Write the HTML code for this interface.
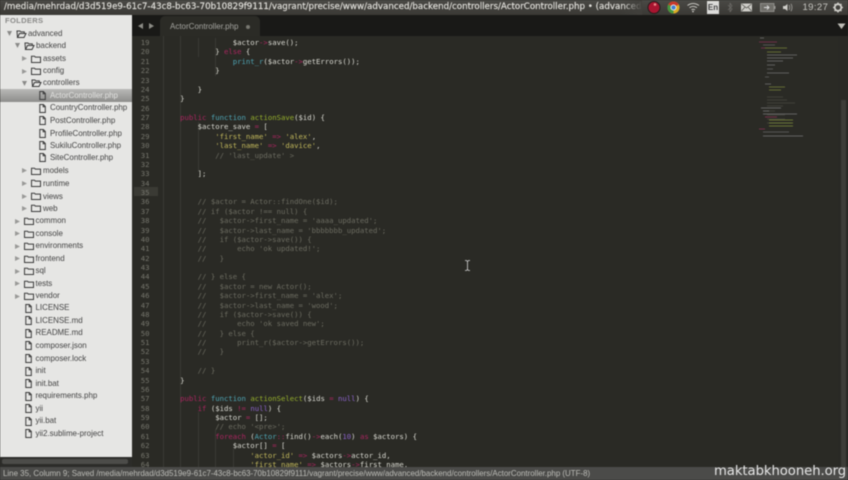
<!DOCTYPE html>
<html><head><meta charset="utf-8"><style>
html,body{margin:0;padding:0;background:#2a2a25}
#root{position:relative;width:848px;height:480px;overflow:hidden;background:#2a2a25;filter:blur(.45px)}
.a{position:absolute}
#top{left:0;top:0;width:848px;height:15px;background:linear-gradient(#4a4945,#3a3935)}
#title{left:4px;top:0;height:15px;font:8.7px/15px "DejaVu Sans",sans-serif;color:#e2e1dc;white-space:nowrap;width:637px;overflow:hidden;-webkit-text-stroke:.15px #e2e1dc}
#tabs{left:132px;top:15px;width:716px;height:21px;background:#191917}
#tab{left:160px;top:16px;width:100px;height:20px;background:#2b2b26;border-radius:5px 5px 0 0}
#tabt{left:170px;top:21px;font:8px/12px "Liberation Sans",sans-serif;color:#a5a5a0;white-space:nowrap}
#side{left:0;top:15px;width:132px;height:442px;background:#e6e6e4}
#sb{left:0;top:457px;width:132px;height:10px;background:#2c2c29}
#sbb{left:2px;top:459px;width:126px;height:5px;background:#4c4c49;border-radius:2px}
#sel{left:0;top:89px;width:132px;height:13px;background:linear-gradient(#b9b9b7,#8d8d8b)}
.t{position:absolute;font:7.95px/12px "Liberation Sans",sans-serif;color:#444;white-space:nowrap;margin-top:.5px}
svg.i{position:absolute;overflow:visible}
#folders{left:5px;top:16px;font:bold 7.6px/10px "Liberation Sans",sans-serif;color:#8a8a88;letter-spacing:.3px}
#nums{left:134px;top:38px;width:15.5px;text-align:right;color:#75756c}
#code{left:162.6px;top:38px}
pre{margin:0;font:7.29px/9.37px "DejaVu Sans Mono","Liberation Mono",monospace;color:#dcdcd4;position:absolute;white-space:pre}
.k{color:#a9255f}.f{color:#4ea5b5}.g{color:#96b02c}.s{color:#c3b95c}.c{color:#6d6d62}.p{color:#8a62c8}.o{color:#a9255f}
#hl{left:134px;top:187px;width:24px;height:9.4px;background:#3a3a34}
#status{left:0;top:467px;width:848px;height:13px;background:#4b4b49}
#stt{left:3px;top:467px;font:7.93px/13px "Liberation Sans",sans-serif;color:#bdbdb8;white-space:nowrap}
#wm{left:714px;top:463px;font:13.2px/17px "DejaVu Sans",sans-serif;color:#e6e6e6;white-space:nowrap;letter-spacing:-.05px}
#scroll{left:838px;top:36px;width:10px;height:431px;background:#292925}
#thumb{left:841px;top:100px;width:5px;height:367px;background:#3d3d38}
#clock{left:802.5px;top:0;font:9.5px/15px "Liberation Sans",sans-serif;color:#c8c7c2;letter-spacing:.4px}
#en{left:707px;top:1px;width:12px;height:13px;background:#dcdcda;color:#444;font:bold 8px/13px "Liberation Sans",sans-serif;text-align:center}
</style></head><body><div id="root">
<svg width="0" height="0" style="position:absolute"><defs>
<symbol id="fo" viewBox="0 0 10 8"><path d="M.5 7.5V1.2h3l.8.9h5.2v5.4z" fill="none" stroke="#3a3a3a" stroke-width="1"/></symbol>
<symbol id="fp" viewBox="0 0 10 8"><path d="M1 7.5L.5 1h3l.8.9h3.5v1.5M1 7.5h6.5l2-4H3z" fill="none" stroke="#3a3a3a" stroke-width="1"/></symbol>
<symbol id="fi" viewBox="0 0 7 9"><path d="M.8.5h3.5l2 2v6h-5.500zM4.200.5v2.200h2.100" fill="none" stroke="#3a3a3a" stroke-width="1"/></symbol>
<symbol id="tr" viewBox="0 0 5 5"><path d="M0 0l5 2.500-5 2.500z" fill="#9a9a98"/></symbol>
<symbol id="td" viewBox="0 0 5 5"><path d="M0 0h5l-2.500 5z" fill="#8a8a88"/></symbol>
</defs></svg>

<div class="a" id="top"></div>
<div class="a" id="title">/media/mehrdad/d3d519e9-61c7-43c8-bc63-70b10829f9111/vagrant/precise/www/advanced/backend/controllers/ActorController.php • (advanced)</div>
<div class="a" style="left:622px;top:0;width:20px;height:15px;background:linear-gradient(90deg,rgba(65,64,60,0),#41403c)"></div>

<svg class="a" style="left:646px;top:0" width="202" height="15" viewBox="0 0 202 15">
<circle cx="8" cy="7.500" r="6" fill="#a81530"/><circle cx="8" cy="7.500" r="6" fill="none" stroke="#241b1b" stroke-width="1"/><circle cx="9" cy="4.500" r="1.300" fill="#e88"/>
<circle cx="27.500" cy="7.500" r="6" fill="#d9ac25"/><path d="M27.500 7.500L22.300 4.500A6 6 0 0 1 32.700 4.500z" fill="#c7372b"/><path d="M27.500 7.500L22.300 4.500A6 6 0 0 0 27.500 13.500z" fill="#44953f"/><circle cx="27.500" cy="7.500" r="2.600" fill="#3f7fd0" stroke="#eee" stroke-width=".9"/>
<path d="M41.500 5.500Q47 1.500 53 5.500M43.500 7.700Q47 5 51 7.700M45.500 9.800Q47 8.700 49 9.800" fill="none" stroke="#c6c5c0" stroke-width="1"/><circle cx="47" cy="11.500" r=".9" fill="#c6c5c0"/>
<path d="M84 3l0 9M82 5l4 4-2 3M82 10l4-4-2-3" fill="none" stroke="#6b6a66" stroke-width=".8"/>
<rect x="95" y="3.500" width="11" height="8" fill="#cfcec9"/><path d="M95.500 4l5 4 5-4M95.500 11l3.500-4M105.500 11l-3.500-4" fill="none" stroke="#55544f" stroke-width=".8"/>
<rect x="114.500" y="3.500" width="13.500" height="8" fill="#6f6e69" stroke="#9a9995" stroke-width=".8"/><rect x="128" y="6" width="1.500" height="3" fill="#9a9995"/><path d="M118 7.500h5M121 5.500l2 2-2 2" stroke="#ddd" stroke-width=".9" fill="none"/>
<path d="M137 6h2l2.500-2v7l-2.500-2h-2z" fill="#cfcec9"/><path d="M143 5q1.500 2.500 0 5M145 3.800q2 3.700 0 7.400" fill="none" stroke="#9a9995" stroke-width=".9"/>
<circle cx="192" cy="7.500" r="3.300" fill="none" stroke="#d0cfca" stroke-width="1.800"/><path d="M192 2.500v2M192 10.500v2M187 7.500h2M195 7.500h2M188.500 4l1.400 1.400M194.100 9.600l1.400 1.400M188.500 11l1.400-1.400M194.100 5.400l1.400-1.400" stroke="#d0cfca" stroke-width="1.300"/>
</svg>
<div class="a" id="en">En</div>
<div class="a" id="clock">19:27</div>

<div class="a" id="tabs"></div>
<div class="a" id="tab"></div>
<div class="a" id="tabt">ActorController.php</div>
<div class="a" style="left:245.500px;top:25px;width:4px;height:4px;border-radius:50%;background:#77776f"></div>
<svg class="a" style="left:136px;top:22px" width="20" height="8"><path d="M7 1L2 4l5 3zM13 1l5 3-5 3z" fill="#8c8c86"/></svg>
<svg class="a" style="left:837px;top:23px" width="9" height="7"><path d="M.5.500h8L4.500 6z" fill="#bdbdb6"/></svg>

<div class="a" id="side"></div>
<div class="a" id="sel"></div>
<div class="a" id="sb"></div><div class="a" id="sbb"></div>
<div class="a" id="folders">FOLDERS</div>

<svg class="i" style="left:7px;top:31px" width="5" height="5"><use href="#td"/></svg><svg class="i" style="left:15.500px;top:29.500px" width="11" height="8"><use href="#fp"/></svg><div class="t" style="left:28px;top:27px">advanced</div>
<svg class="i" style="left:15px;top:43px" width="5" height="5"><use href="#td"/></svg><svg class="i" style="left:23.500px;top:42px" width="11" height="8"><use href="#fp"/></svg><div class="t" style="left:36px;top:39.500px">backend</div>
<svg class="i" style="left:22px;top:56px" width="5" height="5"><use href="#tr"/></svg><svg class="i" style="left:31px;top:54.500px" width="10" height="8"><use href="#fo"/></svg><div class="t" style="left:43px;top:52px">assets</div>
<svg class="i" style="left:22px;top:68.500px" width="5" height="5"><use href="#tr"/></svg><svg class="i" style="left:31px;top:67px" width="10" height="8"><use href="#fo"/></svg><div class="t" style="left:43px;top:64.500px">config</div>
<svg class="i" style="left:22px;top:81px" width="5" height="5"><use href="#td"/></svg><svg class="i" style="left:30.500px;top:79px" width="11" height="8"><use href="#fp"/></svg><div class="t" style="left:43px;top:76.500px">controllers</div>

<svg class="i" style="left:39px;top:91px" width="7" height="9"><use href="#fi"/></svg><div class="t" style="left:50px;top:89.500px;color:#e2e2e0">ActorController.php</div>
<svg class="i" style="left:39px;top:103.500px" width="7" height="9"><use href="#fi"/></svg><div class="t" style="left:50px;top:101.500px">CountryController.php</div>
<svg class="i" style="left:39px;top:116px" width="7" height="9"><use href="#fi"/></svg><div class="t" style="left:50px;top:114.500px">PostController.php</div>
<svg class="i" style="left:39px;top:128.500px" width="7" height="9"><use href="#fi"/></svg><div class="t" style="left:50px;top:127px">ProfileController.php</div>
<svg class="i" style="left:39px;top:141px" width="7" height="9"><use href="#fi"/></svg><div class="t" style="left:50px;top:139px">SukiluController.php</div>
<svg class="i" style="left:39px;top:153px" width="7" height="9"><use href="#fi"/></svg><div class="t" style="left:50px;top:151.500px">SiteController.php</div>

<svg class="i" style="left:22px;top:168px" width="5" height="5"><use href="#tr"/></svg><svg class="i" style="left:31px;top:166.500px" width="10" height="8"><use href="#fo"/></svg><div class="t" style="left:43px;top:164px">models</div>
<svg class="i" style="left:22px;top:181px" width="5" height="5"><use href="#tr"/></svg><svg class="i" style="left:31px;top:179px" width="10" height="8"><use href="#fo"/></svg><div class="t" style="left:43px;top:177px">runtime</div>
<svg class="i" style="left:22px;top:193.500px" width="5" height="5"><use href="#tr"/></svg><svg class="i" style="left:31px;top:192px" width="10" height="8"><use href="#fo"/></svg><div class="t" style="left:43px;top:190px">views</div>
<svg class="i" style="left:22px;top:206px" width="5" height="5"><use href="#tr"/></svg><svg class="i" style="left:31px;top:204px" width="10" height="8"><use href="#fo"/></svg><div class="t" style="left:43px;top:202px">web</div>

<svg class="i" style="left:14.500px;top:218.500px" width="5" height="5"><use href="#tr"/></svg><svg class="i" style="left:24px;top:217px" width="10" height="8"><use href="#fo"/></svg><div class="t" style="left:35.500px;top:214.500px">common</div>
<svg class="i" style="left:14.500px;top:231px" width="5" height="5"><use href="#tr"/></svg><svg class="i" style="left:24px;top:229.500px" width="10" height="8"><use href="#fo"/></svg><div class="t" style="left:35.500px;top:227px">console</div>
<svg class="i" style="left:14.500px;top:243.500px" width="5" height="5"><use href="#tr"/></svg><svg class="i" style="left:24px;top:242px" width="10" height="8"><use href="#fo"/></svg><div class="t" style="left:35.500px;top:239.500px">environments</div>
<svg class="i" style="left:14.500px;top:256px" width="5" height="5"><use href="#tr"/></svg><svg class="i" style="left:24px;top:254.500px" width="10" height="8"><use href="#fo"/></svg><div class="t" style="left:35.500px;top:252px">frontend</div>
<svg class="i" style="left:14.500px;top:268.500px" width="5" height="5"><use href="#tr"/></svg><svg class="i" style="left:24px;top:267px" width="10" height="8"><use href="#fo"/></svg><div class="t" style="left:35.500px;top:264.500px">sql</div>
<svg class="i" style="left:14.500px;top:281px" width="5" height="5"><use href="#tr"/></svg><svg class="i" style="left:24px;top:279.500px" width="10" height="8"><use href="#fo"/></svg><div class="t" style="left:35.500px;top:277px">tests</div>
<svg class="i" style="left:14.500px;top:293.500px" width="5" height="5"><use href="#tr"/></svg><svg class="i" style="left:24px;top:292px" width="10" height="8"><use href="#fo"/></svg><div class="t" style="left:35.500px;top:289px">vendor</div>

<svg class="i" style="left:25px;top:303.500px" width="7" height="9"><use href="#fi"/></svg><div class="t" style="left:35.500px;top:301.500px">LICENSE</div>
<svg class="i" style="left:25px;top:316px" width="7" height="9"><use href="#fi"/></svg><div class="t" style="left:35.500px;top:314.500px">LICENSE.md</div>
<svg class="i" style="left:25px;top:328.500px" width="7" height="9"><use href="#fi"/></svg><div class="t" style="left:35.500px;top:326.500px">README.md</div>
<svg class="i" style="left:25px;top:341px" width="7" height="9"><use href="#fi"/></svg><div class="t" style="left:35.500px;top:339.500px">composer.json</div>
<svg class="i" style="left:25px;top:354px" width="7" height="9"><use href="#fi"/></svg><div class="t" style="left:35.500px;top:352px">composer.lock</div>
<svg class="i" style="left:25px;top:366.500px" width="7" height="9"><use href="#fi"/></svg><div class="t" style="left:35.500px;top:364.500px">init</div>
<svg class="i" style="left:25px;top:379px" width="7" height="9"><use href="#fi"/></svg><div class="t" style="left:35.500px;top:377px">init.bat</div>
<svg class="i" style="left:25px;top:391.500px" width="7" height="9"><use href="#fi"/></svg><div class="t" style="left:35.500px;top:389.500px">requirements.php</div>
<svg class="i" style="left:25px;top:404px" width="7" height="9"><use href="#fi"/></svg><div class="t" style="left:35.500px;top:402px">yii</div>
<svg class="i" style="left:25px;top:416.500px" width="7" height="9"><use href="#fi"/></svg><div class="t" style="left:35.500px;top:414.500px">yii.bat</div>
<svg class="i" style="left:25px;top:429px" width="7" height="9"><use href="#fi"/></svg><div class="t" style="left:35.500px;top:427px">yii2.sublime-project</div>

<div class="a" id="hl"></div>
<div class="a" style="left:162.500px;top:36px;width:1px;height:431px;background:#3a3a34"></div>
<div class="a" style="left:180px;top:36px;width:1px;height:431px;background:#3a3a34"></div>
<div class="a" style="left:197.500px;top:38px;width:1px;height:19px;background:#3a3a34"></div>
<div class="a" style="left:197.500px;top:122px;width:1px;height:50px;background:#3a3a34"></div>
<div class="a" style="left:197.500px;top:412px;width:1px;height:55px;background:#3a3a34"></div>
<div class="a" style="left:215px;top:38px;width:1px;height:38px;background:#3a3a34"></div>
<div class="a" style="left:215px;top:430px;width:1px;height:37px;background:#3a3a34"></div>
<div class="a" style="left:232.500px;top:449px;width:1px;height:18px;background:#3a3a34"></div>

<pre class="a" id="nums">19
20
21
22
23
24
25
26
27
28
29
30
31
32
33
34
35
36
37
38
39
40
41
42
43
44
45
46
47
48
49
50
51
52
53
54
55
56
57
58
59
60
61
62
63
64</pre>
<pre class="a" id="code">                $actor<span class="o">-&gt;</span>save();
            } <span class="k">else</span> {
                <span class="f">print_r</span>($actor<span class="o">-&gt;</span>getErrors());
            }

        }
    }

    <span class="k">public</span> <span class="f">function</span> <span class="g">actionSave</span>($id) {
        $actore_save <span class="o">=</span> [
            <span class="s">'first_name'</span> <span class="o">=&gt;</span> <span class="s">'alex'</span>,
            <span class="s">'last_name'</span> <span class="o">=&gt;</span> <span class="s">'davice'</span>,
            <span class="c">// 'last_update' &gt;</span>

        ];


<span class="c">        // $actor = Actor::findOne($id);
        // if ($actor !== null) {
        //   $actor-&gt;first_name = 'aaaa_updated';
        //   $actor-&gt;last_name = 'bbbbbbb_updated';
        //   if ($actor-&gt;save()) {
        //       echo 'ok updated!';
        //   }

        // } else {
        //   $actor = new Actor();
        //   $actor-&gt;first_name = 'alex';
        //   $actor-&gt;last_name = 'wood';
        //   if ($actor-&gt;save()) {
        //       echo 'ok saved new';
        //   } else {
        //       print_r($actor-&gt;getErrors());
        //   }

        // }</span>
    }

    <span class="k">public</span> <span class="f">function</span> <span class="g">actionSelect</span>($ids <span class="o">=</span> <span class="p">null</span>) {
        <span class="k">if</span> ($ids <span class="o">!=</span> <span class="p">null</span>) {
            $actor <span class="o">=</span> [];
            <span class="c">// echo '&lt;pre&gt;';</span>
            <span class="k">foreach</span> (<span class="f">Actor</span><span class="o">::</span>find()<span class="o">-&gt;</span>each(<span class="p">10</span>) <span class="o">as</span> $actors) {
                $actor[] <span class="o">=</span> [
                    <span class="s">'actor_id'</span> <span class="o">=&gt;</span> $actors<span class="o">-&gt;</span>actor_id,
                    <span class="s">'first_name'</span> <span class="o">=&gt;</span> $actors<span class="o">-&gt;</span>first_name,</pre>

<svg class="a" style="left:755px;top:36px" width="50" height="102" viewBox="0 0 50 102" opacity=".7">
<g stroke-width="1" fill="none">
<path d="M5 2h4" stroke="#777"/><path d="M4 6h18" stroke="#8a3355"/><path d="M8 9h12" stroke="#666"/><path d="M6 12h4" stroke="#8a3355"/><path d="M10 12h22" stroke="#7d8a3a"/>
<path d="M12 16h14" stroke="#7d8a3a"/><path d="M12 19h30" stroke="#777"/><path d="M12 22h26" stroke="#777"/><path d="M12 25h16" stroke="#777"/><path d="M12 29h8" stroke="#777"/><path d="M12 33h6" stroke="#666"/><path d="M12 37h22" stroke="#777"/><path d="M10 41h4" stroke="#666"/>
<path d="M10 48h6" stroke="#777"/><path d="M14 51h16" stroke="#7d8a3a"/><path d="M14 54h12" stroke="#7d8a3a"/>
<path d="M12 61h16M12 64h20M12 67h28M12 70h16M12 75h8M12 79h18M12 83h18M12 87h24" stroke="#4a4a44"/>
</g></svg>
<svg class="a" style="left:755px;top:100px" width="50" height="40" viewBox="0 0 50 40" opacity=".75">
<g stroke-width="1" fill="none"><path d="M6 8h20" stroke="#777"/><path d="M8 11h6" stroke="#777"/><path d="M8 14h34" stroke="#777"/><path d="M10 17h12" stroke="#8a3355"/><path d="M14 20h24" stroke="#7d8a3a"/><path d="M14 23h24" stroke="#7d8a3a"/><path d="M14 26h24" stroke="#7d8a3a"/><path d="M4 29h6" stroke="#8a3355"/><path d="M8 32h26" stroke="#666"/><path d="M8 36h40" stroke="#777"/></g></svg>

<div class="a" id="scroll"></div>
<div class="a" id="thumb"></div>
<svg class="a" style="left:464px;top:260px" width="7" height="11"><path d="M1 .5h1.500l1 1 1-1H6M3.500 1.500v8M1 10.500h1.500l1-1 1 1H6" fill="none" stroke="#d5d5d5" stroke-width=".8"/></svg>

<div class="a" id="status"></div>
<div class="a" id="stt">Line 35, Column 9; Saved /media/mehrdad/d3d519e9-61c7-43c8-bc63-70b10829f9111/vagrant/precise/www/advanced/backend/controllers/ActorController.php (UTF-8)</div>
<div class="a" id="wm">maktabkhooneh.org</div>
</div></body></html>
